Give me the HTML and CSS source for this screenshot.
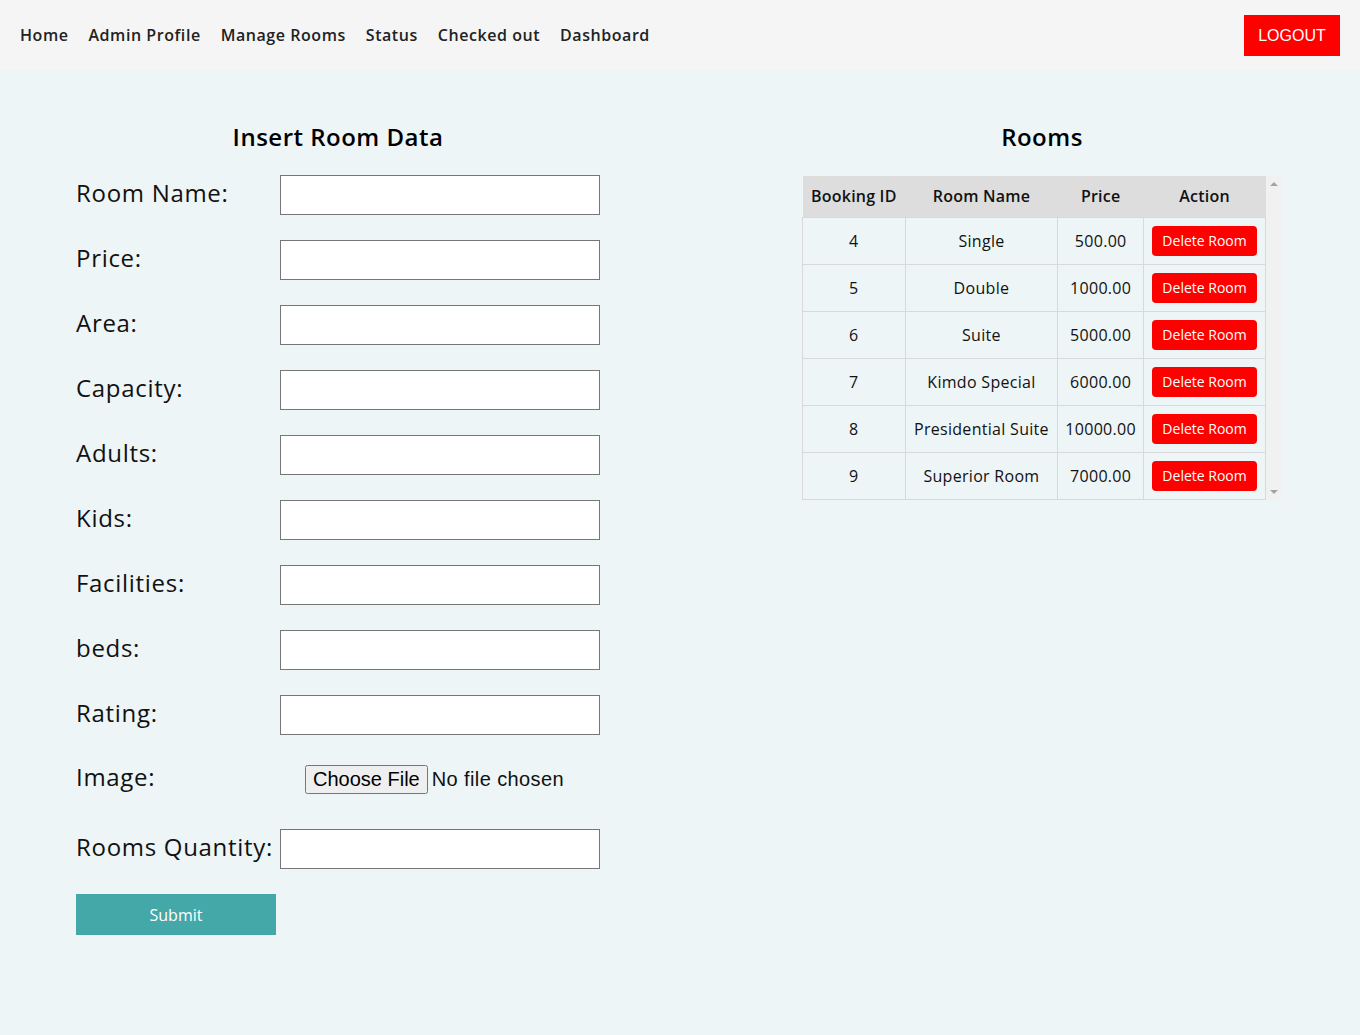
FILE: index.html
```html
<!DOCTYPE html>
<html lang="en">
<head>
<meta charset="utf-8">
<title>Manage Rooms</title>
<link rel="stylesheet" href="styles.css">
</head>
<body>
<header class="nav">
  <nav class="nav-links">
    <a href="#">Home</a>
    <a href="#">Admin Profile</a>
    <a href="#">Manage Rooms</a>
    <a href="#">Status</a>
    <a href="#">Checked out</a>
    <a href="#">Dashboard</a>
  </nav>
  <button class="logout">LOGOUT</button>
</header>
<main class="main">
  <section class="form-col">
    <h2 class="title">Insert Room Data</h2>
    <form class="room-form">
      <div class="row"><label>Room Name:</label><input type="text"></div>
      <div class="row"><label>Price:</label><input type="text"></div>
      <div class="row"><label>Area:</label><input type="text"></div>
      <div class="row"><label>Capacity:</label><input type="text"></div>
      <div class="row"><label>Adults:</label><input type="text"></div>
      <div class="row"><label>Kids:</label><input type="text"></div>
      <div class="row"><label>Facilities:</label><input type="text"></div>
      <div class="row"><label>beds:</label><input type="text"></div>
      <div class="row"><label>Rating:</label><input type="text"></div>
      <div class="row row-file"><label>Image:</label><input type="file" class="file"></div>
      <div class="row"><label>Rooms Quantity:</label><input type="text"></div>
      <button type="button" class="submit">Submit</button>
    </form>
  </section>
  <section class="table-col">
    <h2 class="title">Rooms</h2>
    <div class="table-wrap">
      <table class="rooms">
        <thead>
          <tr><th class="c1">Booking ID</th><th class="c2">Room Name</th><th class="c3">Price</th><th class="c4">Action</th></tr>
        </thead>
        <tbody>
          <tr><td>4</td><td>Single</td><td>500.00</td><td><button class="del">Delete Room</button></td></tr>
          <tr><td>5</td><td>Double</td><td>1000.00</td><td><button class="del">Delete Room</button></td></tr>
          <tr><td>6</td><td>Suite</td><td>5000.00</td><td><button class="del">Delete Room</button></td></tr>
          <tr><td>7</td><td>Kimdo Special</td><td>6000.00</td><td><button class="del">Delete Room</button></td></tr>
          <tr><td>8</td><td>Presidential Suite</td><td>10000.00</td><td><button class="del">Delete Room</button></td></tr>
          <tr><td>9</td><td>Superior Room</td><td>7000.00</td><td><button class="del">Delete Room</button></td></tr>
        </tbody>
      </table>
      <div class="scrollbar"><span class="arrow-up"></span><span class="arrow-down"></span></div>
    </div>
  </section>
</main>
</body>
</html>
```
FILE: styles.css
```css
* { box-sizing: border-box; }
html, body { margin: 0; padding: 0; }
body {
  background: #edf5f6;
  font-family: "Open Sans", "Noto Sans", sans-serif;
  color: #111;
  min-height: 1035px;
}
.nav {
  height: 70px;
  background: #f5f5f5;
  display: flex;
  align-items: center;
  justify-content: space-between;
  padding: 0 20px;
}
.nav-links { display: flex; gap: 20px; }
.nav-links a {
  color: #222;
  text-decoration: none;
  font-size: 16px;
  font-weight: 600;
  letter-spacing: 0.55px;
}
.logout {
  background: #ff0000;
  color: #fff;
  border: none;
  width: 96px;
  height: 41px;
  padding: 2px 0 0;
  font-family: "Liberation Sans", Arial, sans-serif;
  font-size: 16px;
  cursor: pointer;
}
.main {
  display: flex;
  gap: 202px;
  padding: 52px 0 0 76px;
}
.form-col { width: 524px; }
.table-col { width: 480px; }
.title {
  margin: 0 0 23px;
  text-align: center;
  font-size: 24px;
  font-weight: 600;
  line-height: 30px;
  letter-spacing: 0.5px;
  color: #000;
}
.table-col .title { margin-bottom: 24px; }
.room-form { display: flex; flex-direction: column; gap: 25px; }
.row { display: flex; align-items: center; height: 40px; }
.row label {
  flex: 0 0 204px;
  font-size: 24px;
  line-height: 30px;
  padding-bottom: 4px;
  letter-spacing: 0.7px;
  color: #111;
}
.row input[type="text"] {
  width: 320px;
  height: 40px;
  border: 1px solid #767676;
  background: #fff;
  padding: 2px 6px;
}
.row-file { height: 44px; padding-bottom: 6px; }
.file {
  margin-left: 25px;
  font-family: "Liberation Sans", Arial, sans-serif;
  font-size: 20px;
  letter-spacing: 0.4px;
}
.submit {
  width: 200px;
  height: 41px;
  background: #44a8a8;
  color: #fff;
  border: none;
  font-family: inherit;
  font-size: 16px;
}
.table-wrap {
  display: flex;
  width: 479px;
  height: 324px;
}
.scrollbar {
  width: 15px;
  background: #f1f1f1;
  display: flex;
  flex-direction: column;
  justify-content: space-between;
  align-items: center;
  padding: 6px 0;
}
.arrow-up, .arrow-down {
  width: 0;
  height: 0;
  border-left: 4px solid transparent;
  border-right: 4px solid transparent;
}
.arrow-up { border-bottom: 4px solid #a3a3a3; }
.arrow-down { border-top: 4px solid #a3a3a3; }
.rooms {
  width: 464px;
  height: 324px;
  border-collapse: collapse;
  background: #edf5f6;
}
.rooms th {
  background: #dddddd;
  height: 41px;
  font-size: 16px;
  font-weight: 600;
  padding: 0;
  letter-spacing: 0.2px;
}
.rooms td {
  height: 47px;
  border: 1px solid #d9d9d9;
  text-align: center;
  font-size: 16px;
  letter-spacing: 0.3px;
  padding: 0;
}
.c1 { width: 103px; }
.c2 { width: 153px; }
.c3 { width: 86px; }
.c4 { width: 122px; }
.del {
  background: #ff0000;
  color: #fff;
  border: none;
  border-radius: 4px;
  width: 105px;
  height: 30px;
  font-family: inherit;
  font-size: 14px;
  letter-spacing: 0;
}
```
